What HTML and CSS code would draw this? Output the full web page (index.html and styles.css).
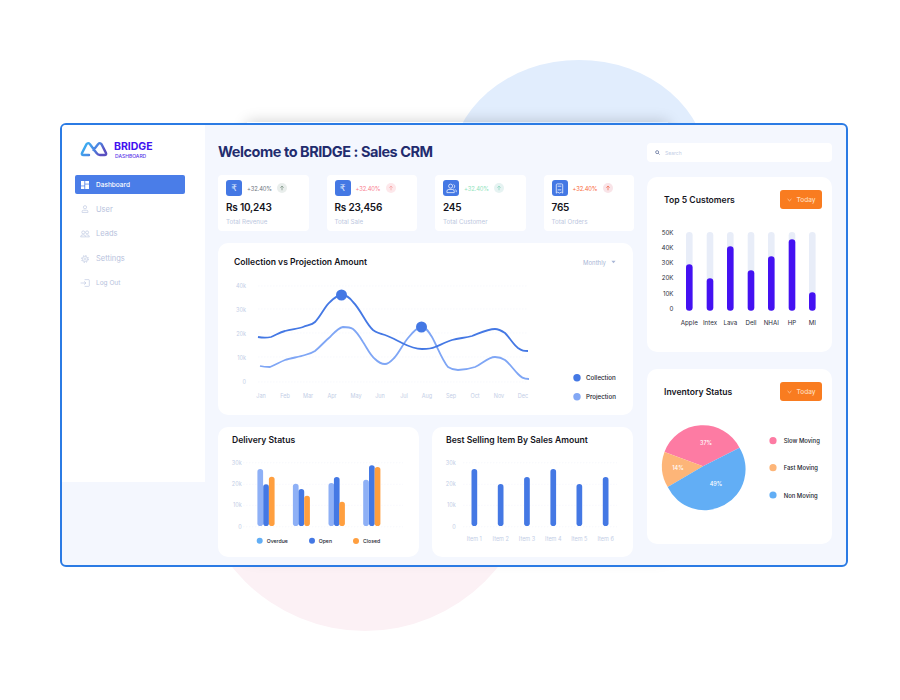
FILE: index.html
```html
<!DOCTYPE html>
<html lang="en">
<head>
  <meta charset="UTF-8" />
  <meta name="viewport" content="width=device-width, initial-scale=1.0"/>
  <title>Bridge Dashboard</title>
  <link rel="stylesheet" href="styles.css">
</head>
<body>
  <div class="blob blob-blue"></div>
  <div class="blob blob-pink"></div>
  <div class="glow"></div>

  <div class="frame">
    <aside class="sidebar">
      <div class="brand">
        <svg class="brand-logo" viewBox="0 0 28 16">
          <defs>
            <linearGradient id="logo-grad" x1="0" y1="0" x2="1" y2="0.4">
              <stop offset="0" stop-color="#36b8f5"/>
              <stop offset="0.55" stop-color="#4a8fe6"/>
              <stop offset="1" stop-color="#5a4fc0"/>
            </linearGradient>
          </defs>
          <path d="M9 14 H3.5 Q1 14 2.2 11.6 L6.5 3.2 Q8 1 10 3.2 L16.5 12 Q18 14 20 14 H24.5 Q27 14 25.8 11.6 L21.5 3.2 Q20 1 18 3.2 L13.5 9" fill="none" stroke="url(#logo-grad)" stroke-width="2.4" stroke-linecap="round"/>
        </svg>
        <div class="brand-text">
          <div class="brand-name">BRIDGE</div>
          <div class="brand-sub">DASHBOARD</div>
        </div>
      </div>
      <nav class="nav">
        <a class="nav-item active">
          <svg class="nav-icon" viewBox="0 0 8 8" fill="#fff"><rect width="3.4" height="4.6"/><rect y="5.3" width="3.4" height="2.7"/><rect x="4.2" width="3.8" height="2.7"/><rect x="4.2" y="3.4" width="3.8" height="4.6"/></svg>
          Dashboard
        </a>
        <a class="nav-item">
          <svg class="nav-icon" viewBox="0 0 10 10" fill="none" stroke="#b9c4df" stroke-width="0.8"><circle cx="5" cy="2.8" r="2"/><path d="M1.4 9.3 V8 Q1.4 6.6 3 6.6 H7 Q8.6 6.6 8.6 8 V9.3 Z"/></svg>
          User
        </a>
        <a class="nav-item">
          <svg class="nav-icon wide" viewBox="0 0 12 10" fill="none" stroke="#b9c4df" stroke-width="0.8"><circle cx="3.8" cy="3" r="1.9"/><circle cx="8.6" cy="3" r="1.9"/><path d="M0.5 8.6 Q0.5 6 3.8 6 Q7 6 7 8.6 Z"/><path d="M7.6 6 Q11.5 5.6 11.5 8.6 H7.4"/></svg>
          Leads
        </a>
        <a class="nav-item">
          <svg class="nav-icon" viewBox="0 0 12 12" fill="none" stroke="#b9c4df"><circle cx="6" cy="6" r="5" stroke-width="1.4" stroke-dasharray="2 1.93"/><circle cx="6" cy="6" r="3.8" stroke-width="0.8"/><circle cx="6" cy="6" r="1.5" stroke-width="0.8"/></svg>
          Settings
        </a>
        <a class="nav-item small">
          <svg class="nav-icon wide" viewBox="0 0 12 10" fill="none" stroke="#b9c4df" stroke-width="0.8"><path d="M0.5 5 H7 M5 3 L7.2 5 L5 7"/><path d="M5.5 0.8 H10.5 Q11.4 0.8 11.4 1.7 V8.3 Q11.4 9.2 10.5 9.2 H5.5"/></svg>
          Log Out
        </a>
      </nav>
    </aside>

    <main class="main">
      <h1 class="page-title">Welcome to BRIDGE : Sales CRM</h1>

      <section class="stats">
        <div class="stat">
          <div class="stat-top">
            <span class="stat-icon">₹</span>
            <span class="pct grey">+32.40%</span>
            <span class="arrow arrow-grey"><svg viewBox="0 0 8 8"><path d="M4 7 V1.5 M1.8 3.6 L4 1.3 L6.2 3.6"/></svg></span>
          </div>
          <div class="stat-value">Rs 10,243</div>
          <div class="stat-label">Total Revenue</div>
        </div>
        <div class="stat">
          <div class="stat-top">
            <span class="stat-icon">₹</span>
            <span class="pct pink">+32.40%</span>
            <span class="arrow arrow-pink"><svg viewBox="0 0 8 8"><path d="M4 7 V1.5 M1.8 3.6 L4 1.3 L6.2 3.6"/></svg></span>
          </div>
          <div class="stat-value">Rs 23,456</div>
          <div class="stat-label">Total Sale</div>
        </div>
        <div class="stat">
          <div class="stat-top">
            <span class="stat-icon">
              <svg viewBox="0 0 12 12" fill="none" stroke="#fff" stroke-width="0.8"><circle cx="5" cy="3.4" r="2.2"/><path d="M1 10.5 V9 Q1 7 3.2 7 H6.8 Q9 7 9 9 V10.5 Z"/><path d="M8.2 1.6 Q10 2.4 9.5 4.4 Q9.1 5.4 8.2 5.6 M10 7 Q11.4 7.6 11.2 10"/></svg>
            </span>
            <span class="pct green">+32.40%</span>
            <span class="arrow arrow-green"><svg viewBox="0 0 8 8"><path d="M4 7 V1.5 M1.8 3.6 L4 1.3 L6.2 3.6"/></svg></span>
          </div>
          <div class="stat-value">245</div>
          <div class="stat-label">Total Customer</div>
        </div>
        <div class="stat">
          <div class="stat-top">
            <span class="stat-icon">
              <svg viewBox="0 0 12 12" fill="none" stroke="#fff" stroke-width="0.8"><path d="M2.5 11 V2 Q2.5 1 3.5 1 H8.5 Q9.5 1 9.5 2 V11 L8 10 L6 11 L4 10 Z"/><path d="M4 3.5 H8 M4 7.5 H8"/></svg>
            </span>
            <span class="pct orange">+32.40%</span>
            <span class="arrow arrow-orange"><svg viewBox="0 0 8 8"><path d="M4 7 V1.5 M1.8 3.6 L4 1.3 L6.2 3.6"/></svg></span>
          </div>
          <div class="stat-value">765</div>
          <div class="stat-label">Total Orders</div>
        </div>
      </section>

      <section class="card line-card">
        <div class="line-head">
          <h2 class="card-title">Collection vs Projection Amount</h2>
          <span class="period">Monthly <svg viewBox="0 0 6 4"><path d="M0.5 0.5 H5.5 L3 3.5 Z"/></svg></span>
        </div>
        <svg class="chart" width="415" height="132" viewBox="0 0 415 132">
          <g class="grid">
            <line x1="40" x2="310" y1="8" y2="8"/><line x1="40" x2="310" y1="31" y2="31"/><line x1="40" x2="310" y1="55" y2="55"/><line x1="40" x2="310" y1="79" y2="79"/><line x1="40" x2="310" y1="104" y2="104"/>
          </g>
          <g class="axis axis-end">
            <text x="28" y="10">40k</text><text x="28" y="33.500">30k</text><text x="28" y="57.500">20k</text><text x="28" y="81.500">10k</text><text x="28" y="105.500">0</text>
          </g>
          <g class="axis axis-mid">
            <text x="43" y="119.500">Jan</text><text x="67" y="119.500">Feb</text><text x="90" y="119.500">Mar</text><text x="114" y="119.500">Apr</text><text x="138" y="119.500">May</text><text x="162" y="119.500">Jun</text><text x="186" y="119.500">Jul</text><text x="209" y="119.500">Aug</text><text x="233" y="119.500">Sep</text><text x="257" y="119.500">Oct</text><text x="281" y="119.500">Nov</text><text x="305" y="119.500">Dec</text>
          </g>
          <path class="line line-light" d="M42 88 C46 89 49 89 52 89 C57 87 62 84 67 82 C73 80 81 79 87 77 C91 76 94 75 97 73 C102 69 107 63 112 59 C116 55 120 50 125 49 C129 49 132 49 135 51 C139 54 142 59 145 64 C149 70 152 77 157 81 C160 84 163 86 167 86 C171 86 174 82 177 79 C182 73 185 66 190 60 C194 55 199 49 204 49 C208 49 211 54 214 59 C219 68 224 82 230 89 C233 91 237 92 240 92 C246 92 251 91 257 89 C264 86 270 79 277 79 C281 79 284 80 287 82 C292 86 296 92 300 96 C303 99 305 101 311 101"/>
          <path class="line line-dark" d="M40 59 C45 60 49 60 53 59 C58 57 62 54 67 53 C73 51 80 51 85 49 C90 47 94 47 97 44 C103 38 107 28 112 24 C116 20 120 17 124 17 C128 17 132 20 135 24 C143 32 148 46 155 52 C159 55 163 56 167 57 C173 59 178 62 184 65 C190 68 197 71 204 71 C209 71 213 71 217 69 C222 67 228 64 234 62 C241 60 247 60 254 58 C262 55 270 51 277 51 C281 51 284 53 287 55 C292 60 295 66 300 70 C304 73 306 73 310 73"/>
          <circle cx="123.500" cy="17" r="5.500" fill="#4478e4"/>
          <circle cx="203.500" cy="49" r="5.500" fill="#4478e4"/>
          <circle cx="359" cy="99.700" r="3.700" fill="#4478e4"/>
          <circle cx="359" cy="118.700" r="3.700" fill="#83a8f5"/>
          <text class="legend" x="368" y="102.200">Collection</text>
          <text class="legend" x="368" y="121.200">Projection</text>
        </svg>
      </section>

      <section class="bottom">
        <div class="card small-card">
          <h2 class="card-title">Delivery Status</h2>
          <svg class="chart" width="201" height="100" viewBox="0 0 201 100">
            <g class="grid"><line x1="25" x2="185" y1="10.700" y2="10.700"/><line x1="25" x2="185" y1="32.300" y2="32.300"/><line x1="25" x2="185" y1="53.300" y2="53.300"/><line x1="25" x2="185" y1="74.700" y2="74.700"/></g>
            <g class="axis axis-end"><text x="23.700" y="12.700">30k</text><text x="23.700" y="34.300">20k</text><text x="23.700" y="55.300">10k</text><text x="23.700" y="76.700">0</text></g>
            <g fill="#8eb0f6">
              <rect x="39.400" y="17" width="5.700" height="57" rx="2.800"/><rect x="74.900" y="31.700" width="5.700" height="42.300" rx="2.800"/><rect x="110.500" y="31" width="5.700" height="43" rx="2.800"/><rect x="145.200" y="27.700" width="5.700" height="46.300" rx="2.800"/>
            </g>
            <g fill="#4478e4">
              <rect x="45.200" y="32.300" width="5.700" height="41.700" rx="2.800"/><rect x="80.500" y="37" width="5.700" height="37" rx="2.800"/><rect x="115.900" y="25" width="5.700" height="49" rx="2.800"/><rect x="151" y="13.300" width="5.700" height="60.700" rx="2.800"/>
            </g>
            <g fill="#ff9f3f">
              <rect x="50.900" y="24.700" width="5.700" height="49.300" rx="2.800"/><rect x="86.200" y="43.700" width="5.700" height="30.300" rx="2.800"/><rect x="121.200" y="49.700" width="5.700" height="24.300" rx="2.800"/><rect x="156.700" y="15" width="5.700" height="59" rx="2.800"/>
            </g>
            <circle cx="41.700" cy="88.700" r="3" fill="#62aef5"/><circle cx="94" cy="88.700" r="3" fill="#4478e4"/><circle cx="138" cy="89" r="3" fill="#ff9f3f"/>
            <text class="legend small" x="48.700" y="90.700">Overdue</text><text class="legend small" x="100.700" y="90.700">Open</text><text class="legend small" x="145" y="91">Closed</text>
          </svg>
        </div>
        <div class="card small-card">
          <h2 class="card-title">Best Selling Item By Sales Amount</h2>
          <svg class="chart" width="201" height="100" viewBox="0 0 201 100">
            <g class="grid"><line x1="31" x2="185" y1="10.700" y2="10.700"/><line x1="31" x2="185" y1="32.300" y2="32.300"/><line x1="31" x2="185" y1="53.300" y2="53.300"/><line x1="31" x2="185" y1="74.700" y2="74.700"/></g>
            <g class="axis axis-end"><text x="23.700" y="12.700">30k</text><text x="23.700" y="34.300">20k</text><text x="23.700" y="55.300">10k</text><text x="23.700" y="76.700">0</text></g>
            <g fill="#4478e4">
              <rect x="39.500" y="17" width="5.700" height="57" rx="2.800"/><rect x="65.800" y="32" width="5.700" height="42" rx="2.800"/><rect x="92.100" y="25" width="5.700" height="49" rx="2.800"/><rect x="118.400" y="17" width="5.700" height="57" rx="2.800"/><rect x="144.500" y="32" width="5.700" height="42" rx="2.800"/><rect x="170.800" y="25" width="5.700" height="49" rx="2.800"/>
            </g>
            <g class="axis axis-mid">
              <text x="42.300" y="89">Item 1</text><text x="68.700" y="89">Item 2</text><text x="95" y="89">Item 3</text><text x="121.300" y="89">Item 4</text><text x="147.300" y="89">Item 5</text><text x="173.700" y="89">Item 6</text>
            </g>
          </svg>
        </div>
      </section>
    </main>

    <div class="right">
      <div class="search">
        <svg viewBox="0 0 8 8" fill="none" stroke="#5f6f9a" stroke-width="1.2"><circle cx="3.4" cy="3.4" r="2.4"/><path d="M5.2 5.2 L7.300 7.300"/></svg>
        <span>Search</span>
      </div>

      <section class="card side-card">
        <div class="side-head">
          <h2 class="card-title">Top 5 Customers</h2>
          <button class="today"><svg viewBox="0 0 6 4"><path d="M0.7 0.8 L3 3 L5.3 0.8"/></svg>Today</button>
        </div>
        <svg class="chart" width="185" height="110" viewBox="0 0 185 110">
          <g class="tick"><text x="26.500" y="9.800">50K</text><text x="26.500" y="25">40K</text><text x="26.500" y="40.300">30K</text><text x="26.500" y="55.300">20K</text><text x="26.500" y="70.700">10K</text><text x="26.500" y="85.700">0</text></g>
          <g fill="#e8edf8">
            <rect x="39" y="7" width="6.600" height="78.700" rx="3.300"/><rect x="59.700" y="7" width="6.600" height="78.700" rx="3.300"/><rect x="80" y="7" width="6.600" height="78.700" rx="3.300"/><rect x="100.700" y="7" width="6.600" height="78.700" rx="3.300"/><rect x="121" y="7" width="6.600" height="78.700" rx="3.300"/><rect x="141.700" y="7" width="6.600" height="78.700" rx="3.300"/><rect x="162" y="7" width="6.600" height="78.700" rx="3.300"/>
          </g>
          <g fill="#4411f2">
            <rect x="39" y="39.300" width="6.600" height="46.400" rx="3.300"/><rect x="59.700" y="53.300" width="6.600" height="32.400" rx="3.300"/><rect x="80" y="21.300" width="6.600" height="64.400" rx="3.300"/><rect x="100.700" y="45.300" width="6.600" height="40.400" rx="3.300"/><rect x="121" y="31.300" width="6.600" height="54.400" rx="3.300"/><rect x="141.700" y="14.300" width="6.600" height="71.400" rx="3.300"/><rect x="162" y="67.300" width="6.600" height="18.400" rx="3.300"/>
          </g>
          <g class="tick tick-mid"><text x="42.300" y="99.800">Apple</text><text x="63" y="99.800">Intex</text><text x="83.300" y="99.800">Lava</text><text x="104" y="99.800">Dell</text><text x="124.300" y="99.800">NHAI</text><text x="145" y="99.800">HP</text><text x="165.300" y="99.800">MI</text></g>
        </svg>
      </section>

      <section class="card side-card">
        <div class="side-head">
          <h2 class="card-title">Inventory Status</h2>
          <button class="today"><svg viewBox="0 0 6 4"><path d="M0.7 0.8 L3 3 L5.3 0.8"/></svg>Today</button>
        </div>
        <svg class="chart pie" width="185" height="115" viewBox="0 0 185 115">
          <path d="M56 56.300 L17.500 42.100 A41 41 0 0 1 92.500 37.700 Z" fill="#fd7ba3"/>
          <path d="M56 56.300 L20.700 77.100 A41 41 0 0 1 17.500 42.100 Z" fill="#fdb578"/>
          <path d="M56 56.300 L92.500 37.700 A41 41 0 1 1 20.700 77.100 Z" fill="#62aef5"/>
          <g class="pie-label"><text x="59" y="34.500">37%</text><text x="31" y="60.300">14%</text><text x="69" y="76.300">49%</text></g>
          <circle cx="126" cy="30.700" r="3.600" fill="#fd7ba3"/><circle cx="126" cy="57.700" r="3.600" fill="#fdb578"/><circle cx="126" cy="85" r="3.600" fill="#62aef5"/>
          <text class="legend narrow" x="136.700" y="33.200">Slow Moving</text><text class="legend narrow" x="136.700" y="60.200">Fast Moving</text><text class="legend narrow" x="136.700" y="87.500">Non Moving</text>
        </svg>
      </section>
    </div>
  </div>
</body>
</html>
```

FILE: styles.css
```css
* {
  box-sizing: border-box;
}

html, body {
  height: 700px;
}

body {
  margin: 0;
  padding: 123px 52px 0 60px;
  background-color: #fff;
  font-family: 'Inter', 'Liberation Sans', sans-serif;
  overflow: hidden;
}

/* decoration behind the frame */
.blob {
  position: absolute;
  border-radius: 50%;
}

.blob-blue {
  left: 450px;
  top: 60px;
  width: 258px;
  height: 220px;
  background-color: #e1edfd;
}

.blob-pink {
  left: 195px;
  top: 291px;
  width: 340px;
  height: 340px;
  background-color: #fcf1f5;
}

.glow {
  position: absolute;
  left: 247px;
  top: 122px;
  width: 421px;
  height: 436px;
  box-shadow: 0 0 14px rgba(0,0,0,0.2);
}

.frame {
  position: relative;
  display: flex;
  align-items: flex-start;
  width: 788px;
  height: 444px;
  border: 2px solid #2b7be4;
  border-radius: 6px;
  background-color: #f4f7fe;
  overflow: hidden;
}

/* sidebar */
.sidebar {
  flex: none;
  width: 143px;
  height: 357px;
  padding: 16px 20px 0 13px;
  background-color: #fff;
}

.brand {
  display: flex;
  gap: 6px;
  padding-left: 5px;
}

.brand-logo {
  flex: none;
  width: 28px;
  height: 16px;
}

.brand-name {
  font-size: 10.5px;
  font-weight: 700;
  line-height: 12px;
  color: #4112f0;
}

.brand-sub {
  margin-left: 1px;
  font-size: 5px;
  font-weight: 500;
  line-height: 7px;
  color: #5a35e8;
}

.nav {
  display: flex;
  flex-direction: column;
  gap: 5.7px;
  margin-top: 15px;
}

.nav-item {
  display: flex;
  align-items: center;
  height: 19px;
  padding-left: 5px;
  font-size: 7.5px;
  color: #b7c2dd;
}

.nav-item.active {
  border-radius: 2px;
  background-color: #4a7de8;
  color: #fff;
  font-size: 6.5px;
  font-weight: 500;
}

.nav-item.small {
  font-size: 6.5px;
}

.nav-icon {
  flex: none;
  width: 8px;
  height: 8px;
  margin: 0 7px 0 1px;
}

.nav-icon.wide {
  width: 10px;
  margin: 0 6px 0 0;
}

/* main column */
.main {
  flex: none;
  width: 415px;
  margin-left: 13px;
  padding-top: 18px;
}

.page-title {
  height: 32px;
  margin: 0;
  font-size: 14.5px;
  font-weight: 700;
  letter-spacing: -0.46px;
  line-height: 18px;
  color: #222c6e;
}

.stats {
  display: grid;
  grid-template-columns: repeat(4, 90.5px);
  gap: 18px;
}

.stat {
  height: 56px;
  padding: 5px 8px 0;
  border-radius: 4px;
  background-color: #fff;
}

.stat-top {
  display: flex;
  align-items: center;
}

.stat-icon {
  display: flex;
  flex: none;
  align-items: center;
  justify-content: center;
  width: 16px;
  height: 16px;
  border-radius: 3px;
  background-color: #4478e4;
  font-family: 'DejaVu Sans', sans-serif;
  font-size: 9px;
  color: #dfe8fb;
}

.stat-icon svg {
  width: 11px;
  height: 11px;
}

.pct {
  width: 30px;
  margin-left: 5px;
  font-size: 5.8px;
  letter-spacing: -0.1px;
}

.grey { color: #6d7480; }
.pink { color: #f9808f; }
.green { color: #8fe3bd; }
.orange { color: #f9693a; }

.arrow {
  display: flex;
  flex: none;
  align-items: center;
  justify-content: center;
  width: 10px;
  height: 10px;
  border-radius: 50%;
}

.arrow svg {
  width: 6px;
  height: 6px;
  fill: none;
  stroke-width: 1;
}

.arrow-grey { background-color: #e9eeec; }
.arrow-grey svg { stroke: #7f9386; }
.arrow-pink { background-color: #fde8eb; }
.arrow-pink svg { stroke: #f6a3a3; }
.arrow-green { background-color: #e6f3f2; }
.arrow-green svg { stroke: #8fd6c0; }
.arrow-orange { background-color: #f9e4e8; }
.arrow-orange svg { stroke: #f26b50; }

.stat-value {
  margin-top: 4px;
  font-size: 10px;
  font-weight: 600;
  letter-spacing: -0.2px;
  line-height: 14px;
  color: #14141c;
}

.stat-label {
  margin-top: 3.5px;
  font-size: 6.2px;
  line-height: 8px;
  color: #bcc7e0;
}

.card {
  border-radius: 10px;
  background-color: #fff;
}

.card-title {
  margin: 0;
  font-size: 8.6px;
  font-weight: 600;
  line-height: 12px;
  color: #14141c;
}

.line-card {
  height: 172px;
  margin-top: 12px;
}

.line-head {
  display: flex;
  justify-content: space-between;
  align-items: center;
  height: 35px;
  padding: 3px 17px 0 16px;
}

.period {
  display: flex;
  align-items: center;
  gap: 5px;
  font-size: 6px;
  color: #a9b6d6;
}

.period svg {
  width: 5px;
  height: 4px;
  fill: #a9b6d6;
}

.chart {
  display: block;
}

.grid line {
  stroke: #f3f5fb;
  stroke-width: 0.6;
  stroke-dasharray: 1.5 1.5;
}

.axis text {
  font-size: 5.5px;
  fill: #c3cee6;
}

.axis-end text {
  text-anchor: end;
}

.axis-mid text {
  text-anchor: middle;
}

.line {
  fill: none;
  stroke-width: 1.8;
}

.line-dark { stroke: #4478e4; }
.line-light { stroke: #7fa6f5; }

.legend {
  font-size: 6.2px;
  font-weight: 500;
  fill: #22242e;
}

.legend.small {
  font-size: 5.2px;
}

.legend.narrow {
  font-size: 5.9px;
}

.bottom {
  display: grid;
  grid-template-columns: 201px 201px;
  gap: 13px;
  margin-top: 12px;
}

.small-card {
  height: 130px;
}

.small-card .card-title {
  height: 25px;
  padding: 7px 0 0 14px;
}

/* right column */
.right {
  flex: none;
  width: 185px;
  margin-left: 14px;
  padding-top: 18px;
}

.search {
  display: flex;
  align-items: center;
  gap: 5px;
  height: 19px;
  padding-left: 8px;
  border-radius: 4px;
  background-color: #fff;
  font-size: 5px;
  color: #c3cee6;
}

.search svg {
  width: 5px;
  height: 5px;
}

.side-card {
  height: 175px;
  margin-top: 15px;
}

.side-card + .side-card {
  margin-top: 17px;
}

.side-head {
  display: flex;
  justify-content: space-between;
  align-items: center;
  height: 48px;
  padding: 13px 10.5px 16px 17px;
}

.today {
  display: flex;
  align-items: center;
  gap: 5px;
  width: 42px;
  height: 19px;
  padding: 0 0 0 7px;
  border: none;
  border-radius: 3px;
  background-color: #f97c20;
  font-family: inherit;
  font-size: 6.5px;
  font-weight: 500;
  color: #ffdcbd;
}

.today svg {
  flex: none;
  width: 5px;
  height: 4px;
  fill: none;
  stroke: #ffdcbd;
  stroke-width: 0.9;
}

.tick text {
  font-size: 6.2px;
  fill: #2c2e3a;
  text-anchor: end;
}

.tick-mid text {
  text-anchor: middle;
}

.pie {
  margin-top: -7px;
}

.pie-label text {
  font-size: 5.5px;
  font-weight: 500;
  fill: #fff;
  text-anchor: middle;
}
```
